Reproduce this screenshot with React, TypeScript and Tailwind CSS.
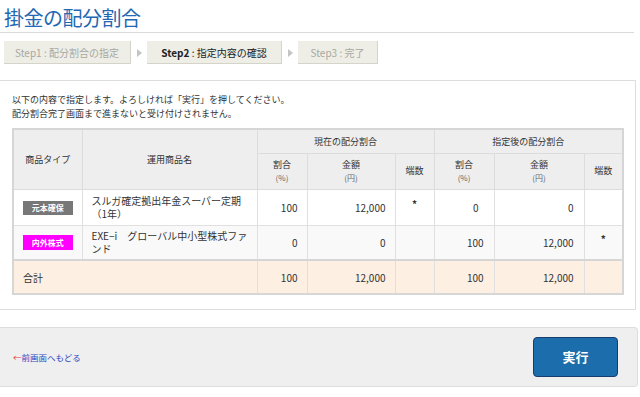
import React from "react";

const Arrow = () => (
  <div className="flex w-[16px] items-center justify-center">
    <svg width="5" height="8" viewBox="0 0 5 8">
      <path d="M0 0 L5 4 L0 8 Z" fill="#c4c4c4" />
    </svg>
  </div>
);

const th = "border border-[#dcdcdc] bg-[#eeeeee] text-[#333] font-normal text-center align-middle";
const td = "border border-[#e0e0e0] text-[#333] align-middle";

export default function App() {
  return (
    <div className="w-[640px] h-[397px] overflow-hidden bg-white font-['Noto_Sans_CJK_JP',sans-serif] text-[#333]">
      {/* Title */}
      <div className="pl-[4px] pt-[5px] pb-[1px] border-b border-[#dadada] w-[634px]">
        <h1 className="text-[20px] leading-[26px] text-[#2468b3] tracking-[-0.5px]">掛金の配分割合</h1>
      </div>

      {/* Steps */}
      <div className="mt-[8px] ml-[4px] flex h-[23px]">
        <div className="w-[127px] flex items-center justify-center bg-[#eeeee6] border-r border-b border-[#d4d4ca] text-[10px] text-[#a8a8a0]">
          Step1 : 配分割合の指定
        </div>
        <Arrow />
        <div className="w-[135px] flex items-center justify-center bg-[#eeeee6] border-r border-b border-[#d4d4ca] text-[10px] text-[#222]">
          <span className="font-bold">Step2</span>&nbsp;:&nbsp;指定内容の確認
        </div>
        <Arrow />
        <div className="w-[80px] flex items-center justify-center bg-[#eeeee6] border-r border-b border-[#d4d4ca] text-[10px] text-[#a8a8a0]">
          Step3 : 完了
        </div>
      </div>

      {/* Panel */}
      <div className="mt-[16px] w-[636px] border border-l-0 border-[#dddddd] pt-[12px] pb-[14px] pl-[12px]">
        <p className="text-[9px] leading-[14px] text-[#333]">
          以下の内容で指定します。よろしければ「実行」を押してください。
          <br />
          配分割合完了画面まで進まないと受け付けされません。
        </p>
        <table className="mt-[7px] w-[610px] border-collapse border-2 border-[#d6d6d6] table-fixed">
          <colgroup>
            <col className="w-[69px]" />
            <col className="w-[175px]" />
            <col className="w-[50px]" />
            <col className="w-[88px]" />
            <col className="w-[39px]" />
            <col className="w-[60px]" />
            <col className="w-[90px]" />
            <col className="w-[39px]" />
          </colgroup>
          <thead>
            <tr className="h-[24px]">
              <th rowSpan={2} className={`${th} text-[9px]`}>商品タイプ</th>
              <th rowSpan={2} className={`${th} text-[9px]`}>運用商品名</th>
              <th colSpan={3} className={`${th} text-[9px]`}>現在の配分割合</th>
              <th colSpan={3} className={`${th} text-[9px]`}>指定後の配分割合</th>
            </tr>
            <tr className="h-[36px]">
              {[0, 1].map((k) => (
                <React.Fragment key={k}>
                  <th className={`${th} text-[9px] leading-[13px]`}>
                    割合
                    <br />
                    <span className="text-[8px] text-[#666]">(%)</span>
                  </th>
                  <th className={`${th} text-[9px] leading-[13px]`}>
                    金額
                    <br />
                    <span className="text-[8px] text-[#666]">(円)</span>
                  </th>
                  <th className={`${th} text-[9px]`}>端数</th>
                </React.Fragment>
              ))}
            </tr>
          </thead>
          <tbody className="text-[10px]">
            <tr className="h-[36px] bg-white">
              <td className={`${td} text-center`}>
                <span className="inline-block w-[50px] h-[14px] leading-[14px] bg-[#777777] text-white text-[8px] font-bold">元本確保</span>
              </td>
              <td className={`${td} pl-[9px] leading-[13.5px]`}>
                スルガ確定拠出年金スーパー定期
                <br />
                （1年）
              </td>
              <td className={`${td} text-right pr-[9px]`}>100</td>
              <td className={`${td} text-right pr-[9px]`}>12,000</td>
              <td className={`${td} text-center`}>
                <span className="relative top-[-4px] text-[10px] font-bold">*</span>
              </td>
              <td className={`${td} text-right pr-[15px]`}>0</td>
              <td className={`${td} text-right pr-[10px]`}>0</td>
              <td className={`${td}`}></td>
            </tr>
            <tr className="h-[35px] bg-[#f9f9f9]">
              <td className={`${td} text-center`}>
                <span className="inline-block w-[50px] h-[15px] leading-[15px] bg-[#ff00ff] text-white text-[8px] font-bold">内外株式</span>
              </td>
              <td className={`${td} pl-[9px] leading-[13.5px]`}>
                EXE−i　グローバル中小型株式ファ
                <br />
                ンド
              </td>
              <td className={`${td} text-right pr-[9px]`}>0</td>
              <td className={`${td} text-right pr-[9px]`}>0</td>
              <td className={`${td}`}></td>
              <td className={`${td} text-right pr-[10px]`}>100</td>
              <td className={`${td} text-right pr-[10px]`}>12,000</td>
              <td className={`${td} text-center`}>
                <span className="relative top-[-4px] text-[10px] font-bold">*</span>
              </td>
            </tr>
            <tr className="h-[34px] bg-[#fdefe1] border-t-2 border-[#d6d6d6]">
              <td colSpan={2} className={`${td} pl-[9px]`}>合計</td>
              <td className={`${td} text-right pr-[9px]`}>100</td>
              <td className={`${td} text-right pr-[9px]`}>12,000</td>
              <td className={`${td}`}></td>
              <td className={`${td} text-right pr-[10px]`}>100</td>
              <td className={`${td} text-right pr-[10px]`}>12,000</td>
              <td className={`${td}`}></td>
            </tr>
          </tbody>
        </table>
      </div>

      {/* Footer */}
      <div className="mt-[17px] w-[638px] h-[60px] bg-[#efefef] border border-l-0 border-[#dddddd] rounded-r-[4px] flex items-center justify-between pl-[13px] pr-[19px]">
        <a className="text-[8.5px] text-[#2b48c2] cursor-pointer">
          <span className="text-[#e04040]">←</span>前画面へもどる
        </a>
        <button className="w-[85px] h-[40px] rounded-[4px] bg-[#1c6dab] border border-[#173c70] text-white text-[13px] font-bold">
          実行
        </button>
      </div>
    </div>
  );
}
